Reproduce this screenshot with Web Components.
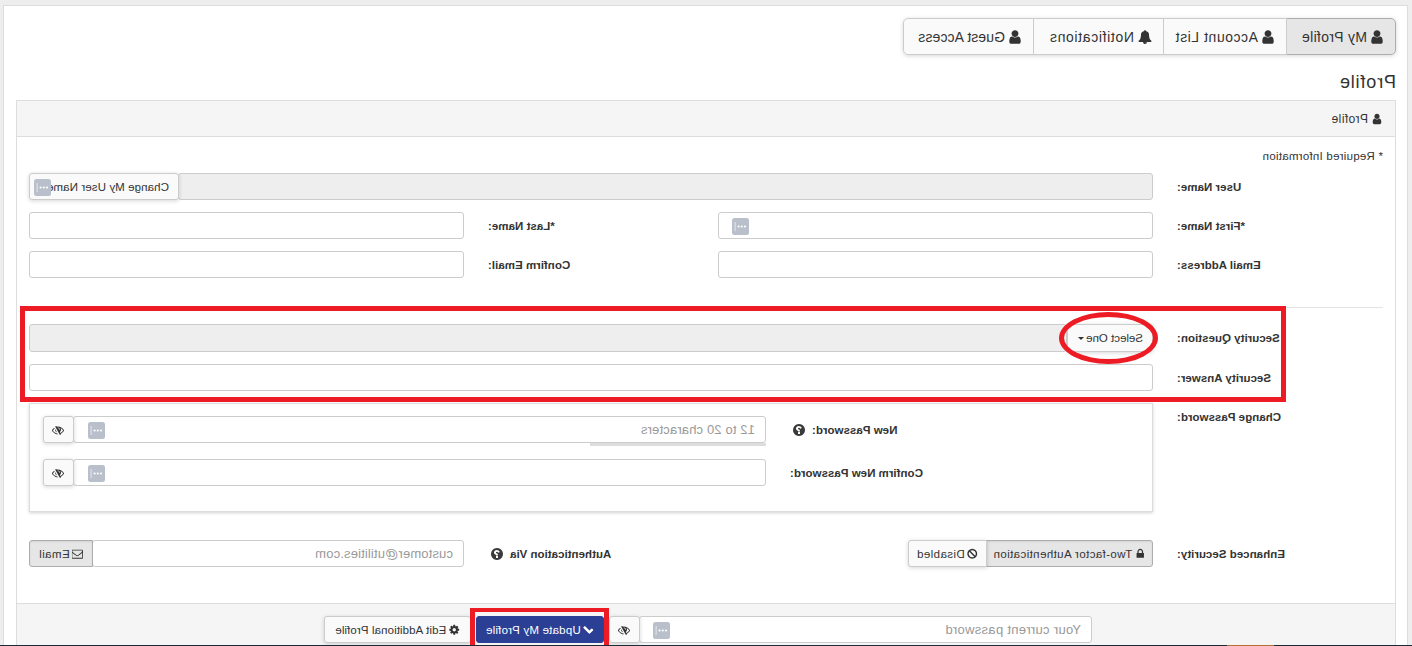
<!DOCTYPE html>
<html>
<head>
<meta charset="utf-8">
<title>Profile</title>
<style>
    html, body { margin: 0; padding: 0; background: #eee; }
</style>
</head>
<body>
<profile-page></profile-page>
<script>
const FA_PATHS = {
    user: 'M1536 1399q0 109-62.5 187t-150.5 78h-854q-88 0-150.5-78t-62.5-187q0-85 8.5-160.5t31.5-152 58.5-131 94-89 134.5-34.5q131 128 313 128t313-128q76 0 134.5 34.5t94 89 58.5 131 31.5 152 8.5 160.5zm-256-887q0 159-112.5 271.5t-271.5 112.5-271.5-112.5-112.5-271.5 112.5-271.5 271.5-112.5 271.5 112.5 112.5 271.5z',
    bell: 'M912 1696q0-16-16-16-59 0-101.5-42.5t-42.5-101.5q0-16-16-16t-16 16q0 73 51.5 124.5t124.5 51.5q16 0 16-16zm816-288q0 52-38 90t-90 38h-448q0 106-75 181t-181 75-181-75-75-181h-448q-52 0-90-38t-38-90q50-42 91-88t85-119.5 74.5-158.5 50-206 19.5-260q0-152 117-282.5t307-158.5q-8-19-8-39 0-40 28-68t68-28 68 28 28 68q0 20-8 39 190 28 307 158.5t117 282.5q0 139 19.5 260t50 206 74.5 158.5 85 119.5 91 88z',
    lock: 'M640 768h512v-192q0-106-75-181t-181-75-181 75-75 181v192zm832 96v576q0 40-28 68t-68 28h-960q-40 0-68-28t-28-68v-576q0-40 28-68t68-28h32v-192q0-184 132-316t316-132 316 132 132 316v192h32q40 0 68 28t28 68z',
    ban: 'M1440 893q0-161-87-295l-754 753q137 89 297 89 111 0 211.5-43.5t173.5-116.5 116-174.5 43-212.5zm-999 299l755-754q-135-91-300-91-148 0-273 73t-198 199-73 274q0 162 89 299zm1223-299q0 157-61 300t-163.5 246-245 164-298.5 61-298.5-61-245-164-163.5-246-61-300 61-299.5 163.5-245.5 245-164 298.5-61 298.5 61 245 164 163.5 245.5 61 299.5z',
    envelope: 'M1664 1504v-768q-32 36-69 66-268 206-426 338-51 43-83 67t-86.5 48.5-102.5 24.5h-2q-48 0-102.5-24.5t-86.5-48.5-83-67q-158-132-426-338-37-30-69-66v768q0 13 9.5 22.5t22.5 9.5h1472q13 0 22.5-9.5t9.5-22.5zm0-1051v-24.5l-.5-13-3-12.5-5.5-9-9-7.5-14-2.5h-1472q-13 0-22.5 9.5t-9.5 22.5q0 168 147 284 193 152 401 317 6 5 35 29.5t46 37.5 44.5 31.5 50.5 27.5 43 9h2q20 0 43-9t50.5-27.5 44.5-31.5 46-37.5 35-29.5q208-165 401-317 54-43 100.5-115.5t46.5-131.5zm128-37v1088q0 66-47 113t-113 47h-1472q-66 0-113-47t-47-113v-1088q0-66 47-113t113-47h1472q66 0 113 47t47 113z',
    cog: 'M1152 896q0-106-75-181t-181-75-181 75-75 181 75 181 181 75 181-75 75-181zm512-109v222q0 12-8 23t-20 13l-185 28q-19 54-39 91 35 50 107 138 10 12 10 25t-9 23q-27 37-99 108t-94 71q-12 0-26-9l-138-108q-44 23-91 38-16 136-29 186-7 28-36 28h-222q-14 0-24.5-8.5t-11.5-21.5l-28-184q-49-16-90-37l-141 107q-10 9-25 9-14 0-25-11-126-114-165-168-7-10-7-23 0-12 8-23 15-21 51-66.5t54-70.5q-27-50-41-99l-183-27q-13-2-21-12.5t-8-23.5v-222q0-12 8-23t19-13l186-28q14-46 39-92-40-57-107-138-10-12-10-24 0-10 9-23 26-36 98.5-107.5t94.5-71.5q13 0 26 10l138 107q44-23 91-38 16-136 29-186 7-28 36-28h222q14 0 24.5 8.5t11.5 21.5l28 184q49 16 90 37l142-107q9-9 24-9 13 0 25 10 129 119 165 170 7 8 7 22 0 12-8 23-15 21-51 66.5t-54 70.5q26 50 41 98l183 28q13 2 21 12.5t8 23.5z',
    check: 'M1671 566q0 40-28 68l-724 724-136 136q-28 28-68 28t-68-28l-136-136-362-362q-28-28-28-68t28-68l136-136q28-28 68-28t68 28l294 295 656-657q28-28 68-28t68 28l136 136q28 28 28 68z',
    question: 'M1024 1376v-192q0-14-9-23t-23-9h-192q-14 0-23 9t-9 23v192q0 14 9 23t23 9h192q14 0 23-9t9-23zm256-672q0-88-55.5-163t-138.5-116-170-41q-243 0-371 213-15 24 8 42l132 100q7 6 19 6 16 0 25-12 53-68 86-92 34-24 86-24 48 0 85.5 26t37.5 59q0 38-20 61t-68 45q-63 28-115.5 86.5t-52.5 125.5v36q0 14 9 23t23 9h192q14 0 23-9t9-23q0-19 21.5-49.5t54.5-49.5q32-18 49-28.5t46-35 44.5-48 28-60.5 12.5-81zm384 192q0 209-103 385.5t-279.5 279.5-385.5 103-385.5-103-279.5-279.5-103-385.5 103-385.5 279.5-279.5 385.5-103 385.5 103 279.5 279.5 103 385.5z',
    eyeslash: 'M555 1335l78-141q-87-63-136-159t-49-203q0-121 61-225-229 117-381 353 167 258 427 375zm389-759q0-20-14-34t-34-14q-125 0-214.5 89.5t-89.5 214.5q0 20 14 34t34 14 34-14 14-34q0-86 61-147t147-61q20 0 34-14t14-34zm363-191q0 7-1 9-106 189-316 567t-315 566l-49 89q-10 16-28 16-12 0-134-70-16-10-16-28 0-12 44-87-143-65-263.5-173t-208.5-245q-20-31-20-69t20-69q153-235 380-371t496-136q89 0 180 17l54-97q10-16 28-16 5 0 18 6t31 15.5 33 18.5 31.5 18.5 19.5 11.5q16 10 16 27zm37 447q0 139-79 253.5t-209 164.5l280-502q8 45 8 84zm448 128q0 35-20 69-39 64-109 145-150 172-347.5 267t-419.5 95l74-132q212-18 392.5-137t301.5-307q-115-179-282-294l63-112q95 64 182.5 153t144.5 184q20 34 20 69z',
};

class FaIcon extends HTMLElement {
    constructor() {
        super();
        const name = this.getAttribute('name');
        this.attachShadow({ mode: 'open' }).innerHTML = `
            <style>
                :host { display: inline-block; flex: none; width: 1em; height: 1em; vertical-align: -0.12em; }
                svg { display: block; width: 100%; height: 100%; fill: currentColor; }
            </style>
            <svg viewBox="0 0 1792 1792"><path d="${FA_PATHS[name]}"/></svg>`;
    }
}
customElements.define('fa-icon', FaIcon);

// little grey password manager badge that sits in the inputs
class KeyBadge extends HTMLElement {
    constructor() {
        super();
        this.attachShadow({ mode: 'open' }).innerHTML = `
            <style>
                :host { display: block; position: absolute; top: 50%; margin-top: -8px; width: 17px; height: 17px; }
                svg { display: block; }
            </style>
            <svg width="17" height="17" viewBox="0 0 17 17">
                <rect width="17" height="17" rx="2.5" fill="#b9bfcb"/>
                <circle cx="4" cy="8.5" r="1.1" fill="#fff"/>
                <circle cx="7.2" cy="8.5" r="1.1" fill="#fff"/>
                <circle cx="10.4" cy="8.5" r="1.1" fill="#fff"/>
                <rect x="13.4" y="4" width="1" height="9" fill="#e4e6eb"/>
            </svg>`;
    }
}
customElements.define('key-badge', KeyBadge);

const buttonTemplate = document.createElement('template');
buttonTemplate.innerHTML = `
    <style>
        :host {
            display: flex; align-items: center; justify-content: center; box-sizing: border-box;
            position: relative; flex: none; height: 27px; padding: 0 8px; gap: 2px;
            background: #fafafa; border: 1px solid #ccc; border-radius: 3px;
            box-shadow: 0 1px 4px rgba(0,0,0,.16);
            color: #333; font-size: 11.5px; letter-spacing: .4px; white-space: nowrap;
        }
        :host([active]) { background: #e6e6e6; border-color: #adadad; box-shadow: inset 0 1px 2px rgba(0,0,0,.08); }
        :host([primary]) { background: #2b3f94; border-color: #2b3f94; color: #fff; box-shadow: none; }
    </style>
    <slot></slot>
`;
class UiButton extends HTMLElement {
    constructor() {
        super();
        this.attachShadow({ mode: 'open' }).appendChild(buttonTemplate.content.cloneNode(true));
    }
}
customElements.define('ui-button', UiButton);

const fieldTemplate = document.createElement('template');
fieldTemplate.innerHTML = `
    <style>
        :host {
            display: flex; align-items: center; box-sizing: border-box; position: relative;
            height: 27px; min-width: 0; flex: 1; padding: 0 10px;
            background: #fff; border: 1px solid #ccc; border-radius: 3px;
            color: #999; font-size: 13px; letter-spacing: .15px; white-space: nowrap;
        }
        :host([grey]) { background: #eee; }
    </style>
    <slot></slot>
`;
class UiField extends HTMLElement {
    constructor() {
        super();
        this.attachShadow({ mode: 'open' }).appendChild(fieldTemplate.content.cloneNode(true));
    }
}
customElements.define('ui-field', UiField);

class FieldLabel extends HTMLElement {
    constructor() {
        super();
        this.attachShadow({ mode: 'open' }).innerHTML = `
            <style>
                :host {
                    display: flex; align-items: center; justify-content: flex-end; gap: 6px;
                    padding-right: 24px; height: 27px;
                    color: #333; font-size: 11.5px; font-weight: 700; letter-spacing: .03px; white-space: nowrap;
                }
            </style>
            <slot></slot>`;
    }
}
customElements.define('field-label', FieldLabel);

class FormRow extends HTMLElement {
    constructor() {
        super();
        this.attachShadow({ mode: 'open' }).innerHTML = `
            <style>
                :host { display: grid; grid-template-columns: 230px 435px 254px 435px; }
                :host([wide]) { grid-template-columns: 230px 1fr; }
            </style>
            <slot></slot>`;
    }
}
customElements.define('form-row', FormRow);

class TabBar extends HTMLElement {
    constructor() {
        super();
        this.attachShadow({ mode: 'open' }).innerHTML = `
            <style>
                :host { display: flex; height: 37px; width: 493px; border-radius: 5px; box-shadow: 0 1px 4px rgba(0,0,0,.16); }
            </style>
            <slot></slot>`;
    }
}
customElements.define('tab-bar', TabBar);

class TabItem extends HTMLElement {
    constructor() {
        super();
        this.attachShadow({ mode: 'open' }).innerHTML = `
            <style>
                :host {
                    display: flex; align-items: center; gap: 2px; box-sizing: border-box; padding-left: 10px;
                    background: #fafafa; border: 1px solid #ccc; margin-left: -1px;
                    color: #333; font-size: 14px; white-space: nowrap;
                }
                :host(:first-child) { margin-left: 0; border-radius: 5px 0 0 5px; }
                :host(:last-child) { border-radius: 0 5px 5px 0; }
                :host([active]) { background: #e6e6e6; border-color: #adadad; }
            </style>
            <slot></slot>`;
    }
}
customElements.define('tab-item', TabItem);

const pageTemplate = document.createElement('template');
pageTemplate.innerHTML = `
    <style>
        :host {
            display: block; position: relative; width: 1412px; height: 646px; overflow: hidden;
            transform: scaleX(-1);
            background: #eee;
            font-family: "Liberation Sans", Arial, sans-serif;
            color: #333;
        }
        .sheet {
            box-sizing: border-box; margin: 5px 3px 0 4px; height: 641px; overflow: hidden;
            padding: 12px 0 0 11px;
            background: #fff; border-top: 1px solid #ddd; border-left: 1px solid #ddd; border-right: 1px solid #ddd;
        }
        tab-item fa-icon { font-size: 16px; }
        tab-item fa-icon[name="bell"] { font-size: 14px; margin: 0 2px 0 1px; }
        h2 { margin: 16px 0 7px; font-size: 18px; line-height: 22px; font-weight: 400; letter-spacing: .85px; color: #333; }
        .panel { width: 1380px; box-sizing: border-box; border: 1px solid #ddd; background: #fff; height: 560px; }
        .panel-head {
            height: 36px; box-sizing: border-box; display: flex; align-items: center; gap: 3px; padding-left: 12px;
            background: #f5f5f5; border-bottom: 1px solid #ddd; font-size: 12px; letter-spacing: .4px;
        }
        .panel-body { padding: 11px 12px 0; height: 466px; box-sizing: border-box; }
        .req { font-size: 11.5px; letter-spacing: .25px; line-height: 16px; margin-bottom: 9px; }
        form-row { margin-bottom: 12px; }
        .grow { display: flex; min-width: 0; }
        hr { border: 0; border-top: 1px solid #e4e4e4; margin: 29px 0 16px; }
        .sec-q { height: 28px; }
        .sec-q ui-field { height: 28px; }
        .select { height: 28px; width: 86px; justify-content: flex-start; padding-left: 9px; letter-spacing: 0; }
        .change { width: 150px; margin-left: -1px; justify-content: flex-start; padding-left: 9px; letter-spacing: .1px; }
        .caret { width: 0; height: 0; border: 3px solid transparent; border-top-color: #333; border-bottom: 0; }
        .pw-box {
            box-sizing: border-box; height: 109px; padding: 12px 13px 0 0;
            background: #fff; border: 1px solid #ddd; box-shadow: 0 1px 3px rgba(0,0,0,.18);
            display: flex; flex-direction: column; gap: 16px;
        }
        .pw-row { display: grid; grid-template-columns: 386px 1fr; }
        .pw-input { display: flex; position: relative; }
        .pw-input ui-button { width: 31px; padding: 0; margin-left: -1px; }
        .pw-input fa-icon, .foot-input fa-icon { font-size: 12px; }
        .strength { position: absolute; left: -1px; top: 26px; height: 3px; width: 176px; background: #ddd; }
        .q { font-size: 14px; margin-right: 2px; color: #3a3a3a; }
        .q fa-icon { display: block; }
        .switch { display: flex; }
        .switch ui-button:first-child { border-radius: 3px 0 0 3px; width: 167px; }
        .switch ui-button:last-child { border-radius: 0 3px 3px 0; width: 79px; margin-left: -1px; }
        .email { display: flex; }
        .email ui-button { border-radius: 0 3px 3px 0; margin-left: -1px; width: 64px; }
        .panel-foot {
            box-sizing: border-box; height: 100px; padding: 12px 0 0 303px; display: flex; gap: 5px;
            background: #f5f5f5; border-top: 1px solid #ddd;
        }
        .foot-input { display: flex; }
        .foot-input ui-field { width: 453px; flex: none; letter-spacing: .3px; }
        .foot-input ui-button { width: 31px; padding: 0; margin-left: -1px; }
        .update { width: 128px; letter-spacing: .2px; }
        .edit { width: 147px; letter-spacing: .1px; }
        .mark-rect { position: absolute; box-sizing: border-box; border: 5px solid #ed1c24; }
        .mark-oval { position: absolute; box-sizing: border-box; border: 5px solid #ed1c24; border-radius: 50%; }
        .taskbar { position: absolute; left: 0; right: 0; bottom: 0; height: 1px; background: #1e2a38; }
        .taskbar i { position: absolute; right: 1227px; width: 47px; height: 1px; background: #b5703a; }
    </style>
    <div class="sheet">
        <tab-bar>
            <tab-item active style="width:110px;letter-spacing:.3px"><fa-icon name="user"></fa-icon>My Profile</tab-item>
            <tab-item style="width:124px;letter-spacing:.55px"><fa-icon name="user"></fa-icon>Account List</tab-item>
            <tab-item style="width:131px;letter-spacing:.65px"><fa-icon name="bell"></fa-icon>Notifications</tab-item>
            <tab-item style="width:131px;letter-spacing:.1px"><fa-icon name="user"></fa-icon>Guest Access</tab-item>
        </tab-bar>
        <h2>Profile</h2>
        <div class="panel">
            <div class="panel-head"><fa-icon name="user"></fa-icon> Profile</div>
            <div class="panel-body">
                <div class="req">* Required Information</div>
                <form-row wide>
                    <field-label>User Name:</field-label>
                    <div class="grow">
                        <ui-field grey></ui-field>
                        <ui-button class="change">Change My User Name<key-badge style="right:4px"></key-badge></ui-button>
                    </div>
                </form-row>
                <form-row>
                    <field-label>*First Name:</field-label>
                    <ui-field><key-badge style="right:13px"></key-badge></ui-field>
                    <field-label>*Last Name:</field-label>
                    <ui-field></ui-field>
                </form-row>
                <form-row style="margin-bottom:0">
                    <field-label>Email Address:</field-label>
                    <ui-field></ui-field>
                    <field-label>Confirm Email:</field-label>
                    <ui-field></ui-field>
                </form-row>
                <hr>
                <form-row wide class="sec-q">
                    <field-label style="height:28px">Security Question:</field-label>
                    <div class="grow">
                        <ui-button class="select">Select One <span class="caret"></span></ui-button>
                        <ui-field grey></ui-field>
                    </div>
                </form-row>
                <form-row wide>
                    <field-label>Security Answer:</field-label>
                    <ui-field></ui-field>
                </form-row>
                <form-row wide style="margin-bottom:0">
                    <field-label>Change Password:</field-label>
                    <div class="pw-box">
                        <div class="pw-row">
                            <field-label>New Password:<span class="q"><fa-icon name="question"></fa-icon></span></field-label>
                            <div class="pw-input">
                                <ui-field>12 to 20 characters<key-badge style="right:14px"></key-badge><span class="strength"></span></ui-field>
                                <ui-button><fa-icon name="eyeslash"></fa-icon></ui-button>
                            </div>
                        </div>
                        <div class="pw-row">
                            <field-label>Confirm New Password:</field-label>
                            <div class="pw-input">
                                <ui-field><key-badge style="right:14px"></key-badge></ui-field>
                                <ui-button><fa-icon name="eyeslash"></fa-icon></ui-button>
                            </div>
                        </div>
                    </div>
                </form-row>
                <form-row style="margin-top:28px">
                    <field-label>Enhanced Security:</field-label>
                    <div class="switch">
                        <ui-button active><fa-icon name="lock"></fa-icon> Two-factor Authentication</ui-button>
                        <ui-button><fa-icon name="ban"></fa-icon> Disabled</ui-button>
                    </div>
                    <field-label>Authentication Via<span class="q"><fa-icon name="question"></fa-icon></span></field-label>
                    <div class="email">
                        <ui-field>customer@utilities.com</ui-field>
                        <ui-button active><fa-icon name="envelope"></fa-icon> Email</ui-button>
                    </div>
                </form-row>
            </div>
            <div class="panel-foot">
                <div class="foot-input">
                    <ui-field>Your current password<key-badge style="right:13px"></key-badge></ui-field>
                    <ui-button><fa-icon name="eyeslash"></fa-icon></ui-button>
                </div>
                <ui-button primary class="update"><fa-icon name="check"></fa-icon> Update My Profile</ui-button>
                <ui-button class="edit"><fa-icon name="cog"></fa-icon> Edit Additional Profile</ui-button>
            </div>
        </div>
    </div>
    <div class="mark-rect" style="left:126px;top:306px;width:1266px;height:96px"></div>
    <div class="mark-oval" style="left:254px;top:312px;width:99px;height:52px"></div>
    <div class="mark-rect" style="left:803px;top:608px;width:139px;height:42px;border-top-width:4px"></div>
    <div class="taskbar"><i></i></div>
`;

class ProfilePage extends HTMLElement {
    constructor() {
        super();
        this.attachShadow({ mode: 'open' }).appendChild(pageTemplate.content.cloneNode(true));
    }
}
customElements.define('profile-page', ProfilePage);
</script>
</body>
</html>
